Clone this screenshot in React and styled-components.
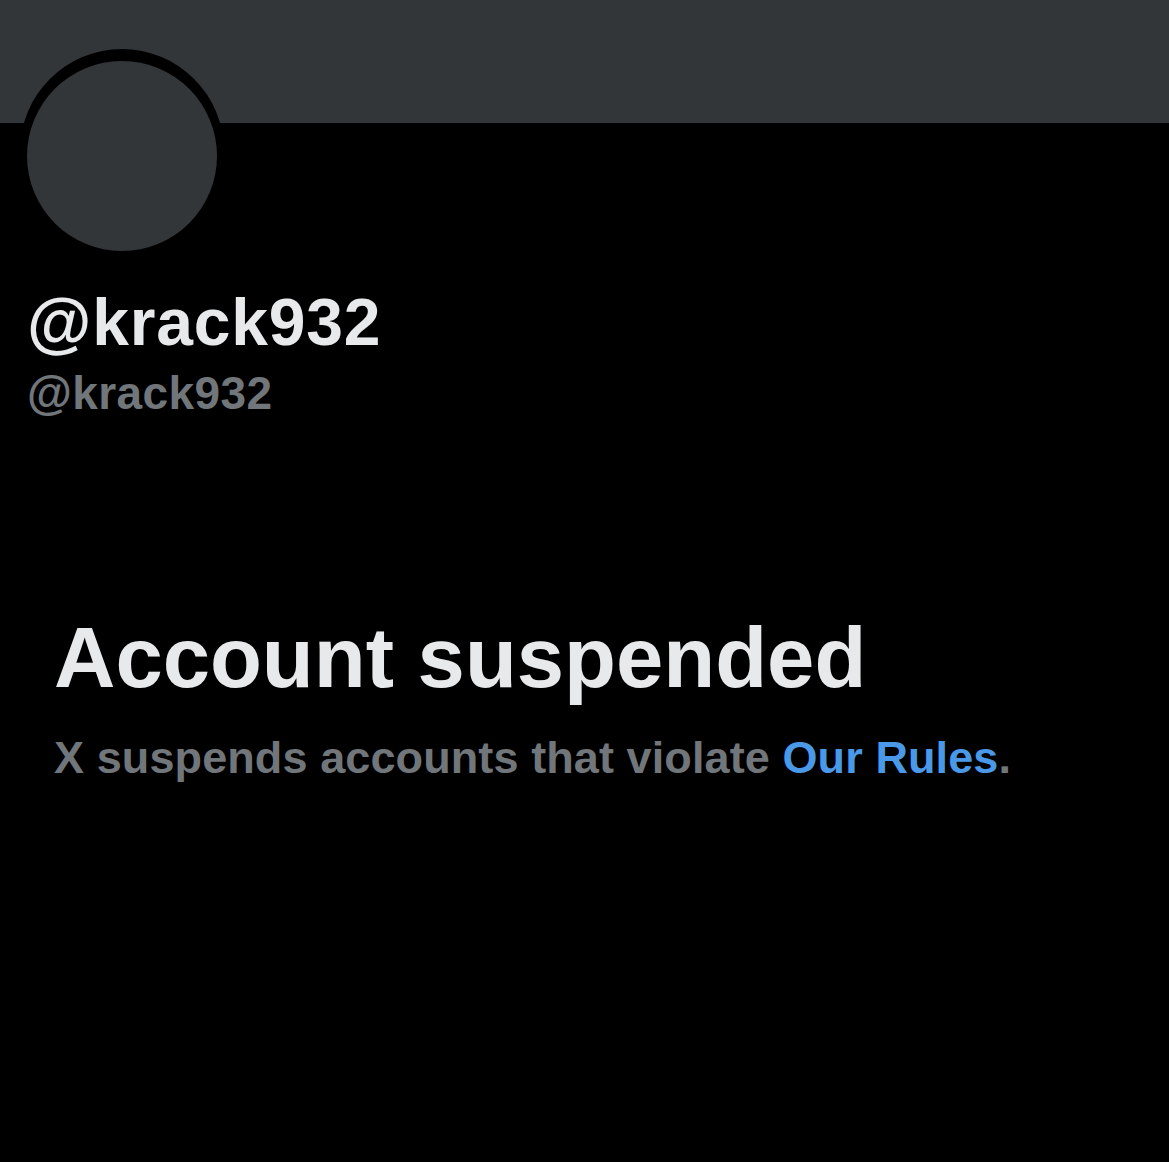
import React from "react";
import styled, { createGlobalStyle } from "styled-components";

const Global = createGlobalStyle`
  html, body { margin: 0; padding: 0; background: #000; }
  body { font-family: "Liberation Sans", Arial, sans-serif; }
`;

const Page = styled.div`
  width: 1169px;
  height: 1162px;
  background: #000;
  overflow: hidden;
  display: flex;
  flex-direction: column;
`;

const Banner = styled.div`
  height: 123px;
  background: #333639;
  flex-shrink: 0;
`;

const AvatarRing = styled.div`
  margin-top: -74px;
  margin-left: 20px;
  width: 204px;
  height: 204px;
  box-sizing: border-box;
  padding: 12px 7px 2px 7px;
  border-radius: 50%;
  background: #000;
  flex-shrink: 0;
`;

const Avatar = styled.div`
  width: 190px;
  height: 190px;
  border-radius: 50%;
  background: #333639;
`;

const Profile = styled.div`
  display: flex;
  flex-direction: column;
  padding-left: 27px;
  margin-top: 29px;
`;

const Name = styled.div`
  font-weight: 700;
  font-size: 66px;
  line-height: 80px;
  color: #e7e9ea;
  letter-spacing: 0.8px;
`;

const Handle = styled.div`
  margin-top: 3px;
  font-weight: 700;
  font-size: 46px;
  line-height: 56px;
  color: #71767b;
  letter-spacing: 0.4px;
`;

const Notice = styled.div`
  display: flex;
  flex-direction: column;
  padding-left: 54px;
  margin-top: 187px;
  gap: 25px;
`;

const Title = styled.div`
  font-weight: 700;
  font-size: 85px;
  line-height: 100px;
  color: #e7e9ea;
`;

const Body = styled.div`
  font-weight: 700;
  font-size: 45px;
  line-height: 50px;
  color: #71767b;
  letter-spacing: 0.1px;
`;

const Link = styled.span`
  color: #4a99e9;
`;

export default function App() {
  return (
    <>
      <Global />
      <Page>
        <Banner />
        <AvatarRing>
          <Avatar />
        </AvatarRing>
        <Profile>
          <Name>@krack932</Name>
          <Handle>@krack932</Handle>
        </Profile>
        <Notice>
          <Title>Account suspended</Title>
          <Body>
            X suspends accounts that violate <Link>Our Rules</Link>.
          </Body>
        </Notice>
      </Page>
    </>
  );
}
